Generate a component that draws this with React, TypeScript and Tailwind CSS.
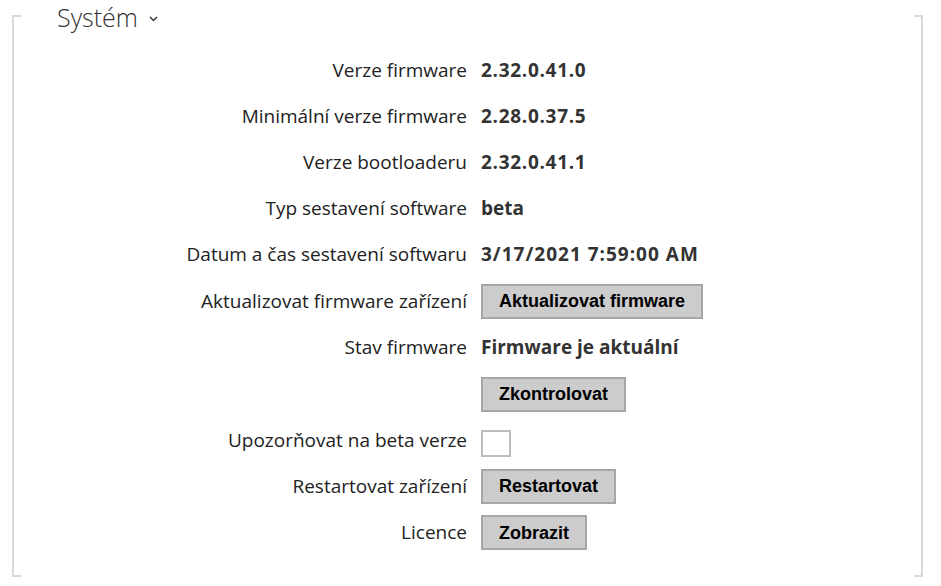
import React from "react";

const font = { fontFamily: '"Open Sans", "Noto Sans", sans-serif' };

function Btn({ children }: { children: React.ReactNode }) {
  return (
    <button
      className="h-[35px] border-2 border-[#a6a6a6] bg-[#cccccc] px-4 text-[18px] font-bold text-black leading-none"
      style={{ fontFamily: '"Liberation Sans", Arial, sans-serif' }}
    >
      {children}
    </button>
  );
}

type Row = { label: string; h: string; value: React.ReactNode };

export default function App() {
  const rows: Row[] = [
    { label: "Verze firmware", h: "h-[46px]", value: <span className="font-bold tracking-[0.7px]">2.32.0.41.0</span> },
    { label: "Minimální verze firmware", h: "h-[46px]", value: <span className="font-bold tracking-[0.7px]">2.28.0.37.5</span> },
    { label: "Verze bootloaderu", h: "h-[46px]", value: <span className="font-bold tracking-[0.7px]">2.32.0.41.1</span> },
    { label: "Typ sestavení software", h: "h-[46px]", value: <span className="font-bold">beta</span> },
    { label: "Datum a čas sestavení softwaru", h: "h-[47px]", value: <span className="font-bold tracking-[1px]">3/17/2021 7:59:00 AM</span> },
    { label: "Aktualizovat firmware zařízení", h: "h-[46px]", value: <Btn>Aktualizovat firmware</Btn> },
    { label: "Stav firmware", h: "h-[46px]", value: <span className="font-bold">Firmware je aktuální</span> },
    { label: "", h: "h-[48px]", value: <Btn>Zkontrolovat</Btn> },
    { label: "Upozorňovat na beta verze", h: "h-[45px]", value: <div className="mt-[6px] h-[27px] w-[30px] border-2 border-[#bdbdbd] bg-white" /> },
    { label: "Restartovat zařízení", h: "h-[46px]", value: <Btn>Restartovat</Btn> },
    { label: "Licence", h: "h-[47px]", value: <Btn>Zobrazit</Btn> },
  ];

  return (
    <div className="h-[586px] w-[941px] bg-white px-[12px] pt-[15px]" style={font}>
      <div className="flex h-[562px] w-[911px] flex-col border-x-2 border-[#d9d9d9]">
        <div className="flex justify-between">
          <div className="h-[2px] w-[7px] bg-[#d9d9d9]" />
          <div className="h-[2px] w-[7px] bg-[#d9d9d9]" />
        </div>
        <div className="-mt-[15px] flex h-[30px] items-center pl-[43px] text-[#333]">
          <span className="text-[25px] font-light leading-none">Systém</span>
          <svg className="ml-[11px] mt-[4px]" width="9" height="6" viewBox="0 0 9 6">
            <path d="M1 1l3.5 3.5L8 1" fill="none" stroke="#333" strokeWidth="1.5" />
          </svg>
        </div>
        <div className="mt-[15px] flex flex-col">
          {rows.map((r, i) => (
            <div key={i} className={`flex items-center ${r.h}`}>
              <div className="w-[453px] text-right text-[19px] text-[#222]">{r.label}</div>
              <div className="ml-[14px] flex items-center text-[19px] text-[#333]">{r.value}</div>
            </div>
          ))}
        </div>
        <div className="flex-1" />
        <div className="flex justify-between">
          <div className="h-[2px] w-[7px] bg-[#d9d9d9]" />
          <div className="h-[2px] w-[7px] bg-[#d9d9d9]" />
        </div>
      </div>
    </div>
  );
}
